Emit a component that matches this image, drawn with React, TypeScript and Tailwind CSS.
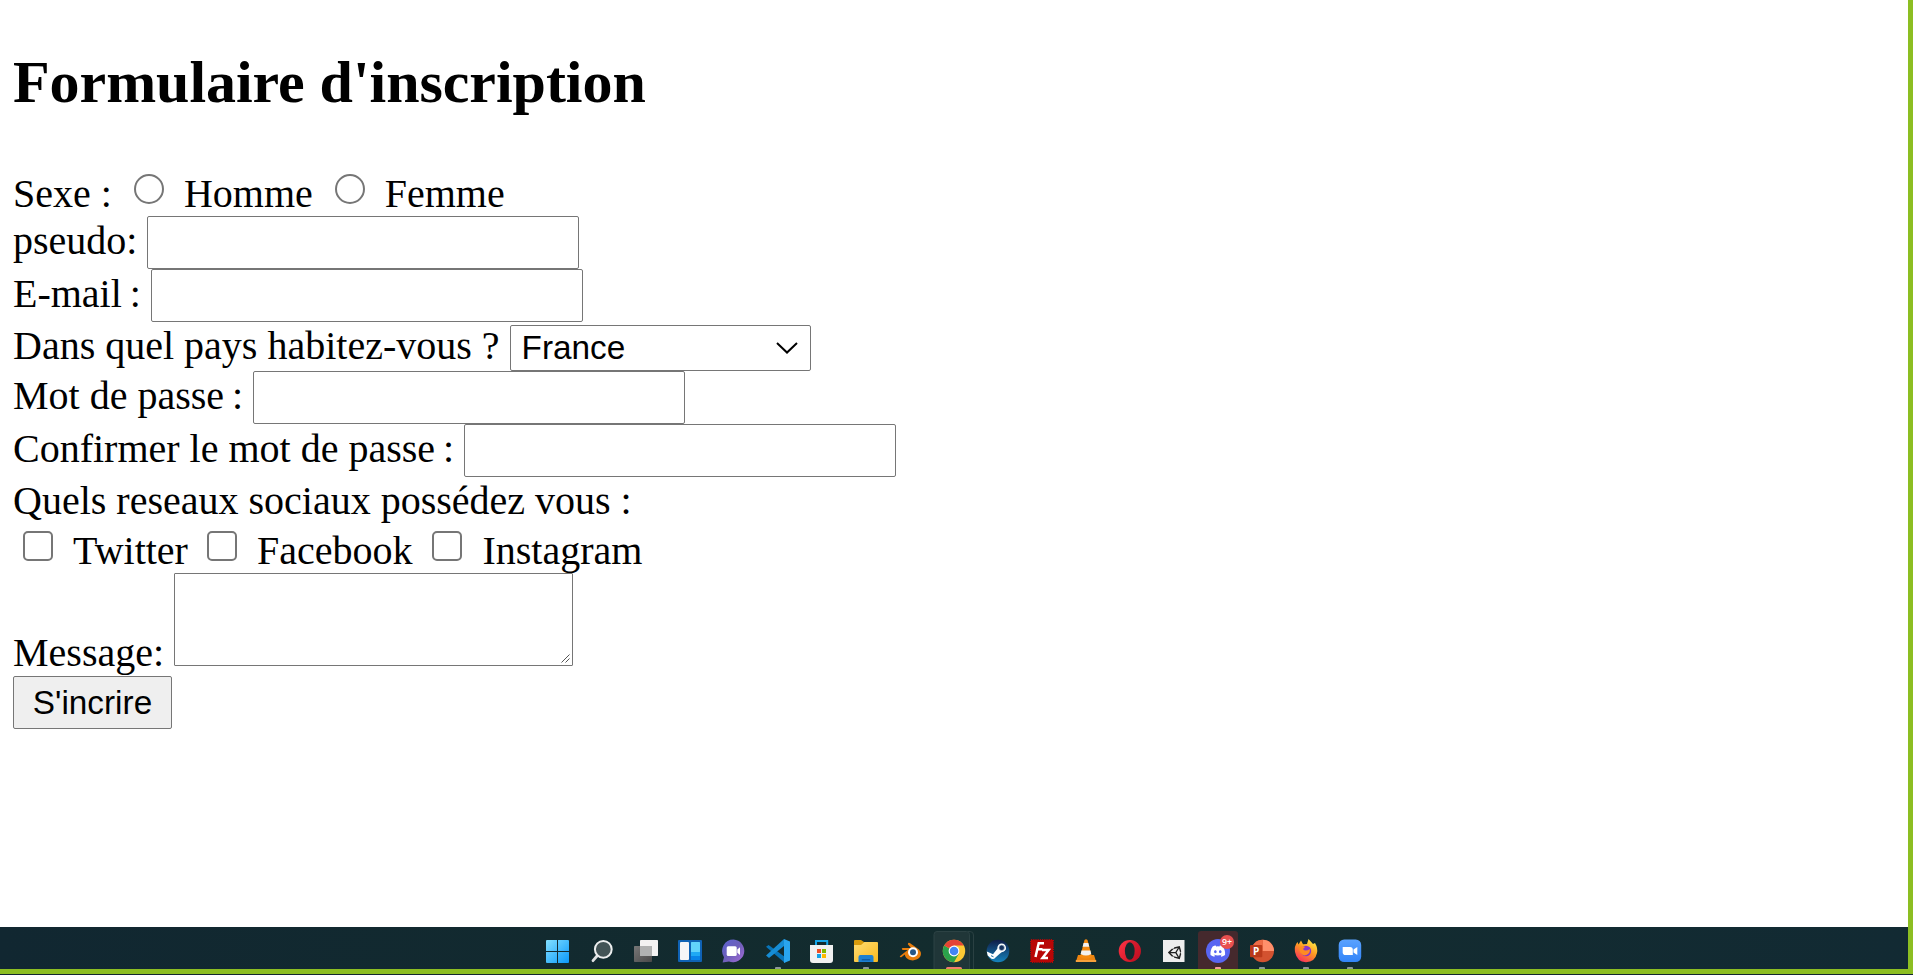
import type { ReactNode } from "react";
import { FaDiscord, FaUnity } from "react-icons/fa";

const box = "block h-[53px] w-[432px] rounded-[2px] border border-[#767676] bg-white outline-none";
const text = "whitespace-pre leading-[40px]";

function Field({ label, id, type, colon }: { label: string; id: string; type: string; colon: string }) {
  return (
    <div className="flex h-[53px] gap-[10px]">
      <label htmlFor={id} className={`${text} mt-[5px]`}>
        {label}
        <span className={colon}>:</span>
      </label>
      <input id={id} type={type} className={box} />
    </div>
  );
}

function Radio({ label, space }: { label: string; space: string }) {
  return (
    <label className={`flex ${space}`}>
      <input
        type="radio"
        name="sexe"
        className="mt-1 size-[30px] appearance-none rounded-full border-2 border-[#767676] bg-white"
      />
      <span className={`${text} ml-5 mt-1`}>{label}</span>
    </label>
  );
}

function Check({ label, space }: { label: string; space: string }) {
  return (
    <label className={`flex ${space}`}>
      <input
        type="checkbox"
        className="mt-1 size-[30px] appearance-none rounded-[5px] border-2 border-[#767676] bg-white"
      />
      <span className={`${text} ml-5 mt-1`}>{label}</span>
    </label>
  );
}

function App44({ children, mark }: { children: ReactNode; mark?: string }) {
  return (
    <svg viewBox="0 0 44 42" className="block h-[42px] w-11 shrink-0 overflow-visible">
      {children}
      {mark && <rect x="19" y="40" width="6" height="3" rx="1" fill={mark} />}
    </svg>
  );
}

function Taskbar() {
  const grey = "#8c9698";
  return (
    <div className="flex h-[42px] w-[1908px] overflow-hidden bg-gradient-to-r from-[#112731] via-[#132c2e] to-[#122a33] pl-[536px]">
      <App44>
        <defs>
          <linearGradient id="win" gradientUnits="userSpaceOnUse" x1="10" y1="13" x2="33" y2="36">
            <stop offset="0" stopColor="#83e0ff" />
            <stop offset="1" stopColor="#0a98fb" />
          </linearGradient>
          <linearGradient id="back" x1="0" y1="0" x2="1" y2="1">
            <stop offset="0" stopColor="#777" />
            <stop offset="1" stopColor="#494949" />
          </linearGradient>
          <linearGradient id="chat" x1="0" y1="0" x2="1" y2="1">
            <stop offset="0" stopColor="#5b62d0" />
            <stop offset=".5" stopColor="#6d5fba" />
            <stop offset="1" stopColor="#a56bd8" />
          </linearGradient>
          <linearGradient id="folder" x1="0" y1="0" x2="1" y2="1">
            <stop offset="0" stopColor="#ffdc73" />
            <stop offset="1" stopColor="#f9b91d" />
          </linearGradient>
          <linearGradient id="steam" x1="0" y1="0" x2="0" y2="1">
            <stop offset="0" stopColor="#101b46" />
            <stop offset="1" stopColor="#1583bd" />
          </linearGradient>
          <linearGradient id="opera" x1="0" y1="0" x2="1" y2="1">
            <stop offset="0" stopColor="#ff3446" />
            <stop offset="1" stopColor="#c8101f" />
          </linearGradient>
          <linearGradient id="fox" x1=".8" y1="0" x2=".2" y2="1">
            <stop offset="0" stopColor="#fff04a" />
            <stop offset=".45" stopColor="#ff9b22" />
            <stop offset="1" stopColor="#f72660" />
          </linearGradient>
          <linearGradient id="zoom" x1="0" y1="0" x2="0" y2="1">
            <stop offset="0" stopColor="#5aa2ff" />
            <stop offset="1" stopColor="#3284f8" />
          </linearGradient>
        </defs>
        <g fill="url(#win)">
          <path d="M10 14q0-1 1-1H21V24H10Z" />
          <path d="M22 13H32q1 0 1 1V24H22Z" />
          <path d="M10 25H21V36H11q-1 0-1-1Z" />
          <path d="M22 25H33V35q0 1-1 1H22Z" />
        </g>
      </App44>
      <App44>
        <path d="M17 29L13 33.7" stroke="#dfe1e2" strokeWidth="2.8" strokeLinecap="round" />
        <circle cx="23.3" cy="22.3" r="8.4" fill="#435456" stroke="#eceeee" strokeWidth="2" />
      </App44>
      <App44>
        <rect x="16" y="13" width="18" height="16" rx=".7" fill="#f3f3f3" />
        <rect x="10" y="19" width="18" height="16" rx=".7" fill="url(#back)" />
        <rect x="16" y="19" width="12" height="10" fill="#b0b2b2" />
      </App44>
      <App44>
        <rect x="10" y="13" width="24" height="22" rx="1" fill="#0f62b5" />
        <rect x="12" y="15" width="9" height="18" rx="1" fill="#f5f5f7" />
        <rect x="23" y="15" width="9" height="10" rx=".5" fill="#62d3fb" />
        <rect x="23" y="25" width="9" height="4" fill="#1fa9f5" />
        <rect x="23" y="29" width="9" height="4" fill="#0984e8" />
      </App44>
      <App44>
        <path d="M21.6 12.5A11.4 11.4 0 1 1 17 34.6L10.6 35.5L12 30.2A11.4 11.4 0 0 1 21.6 12.5Z" fill="url(#chat)" />
        <rect x="14.7" y="19.2" width="10" height="9.8" rx="1.5" fill="#fff" />
        <path d="M25.3 22.5L28 20.3V28L25.3 25.8Z" fill="#fff" />
      </App44>
      <App44 mark={grey}>
        <path d="M10 19.7L12.6 18L29 30V36Z" fill="#0874b8" />
        <path d="M10 28.6L28 12V19L13 31Z" fill="#168dd5" />
        <path d="M28 12L34 14.6V33.4L28 36Z" fill="#29a5ef" />
      </App44>
      <App44>
        <path d="M16 19V14H27.2V19" fill="none" stroke="#15a5e8" strokeWidth="2" />
        <path d="M10 18H33V33q0 3-3 3H13q-3 0-3-3Z" fill="#f1f1f1" />
        <path d="M17 22H21V26H17Z" fill="#ef4e24" />
        <path d="M22 22H26V26H22Z" fill="#7db900" />
        <path d="M17 27H21V31H17Z" fill="#13a2e8" />
        <path d="M22 27H26V31H22Z" fill="#ffb900" />
      </App44>
      <App44 mark={grey}>
        <path d="M10 14q0-1 1-1H17L20 15H24V21H10Z" fill="#d99b0c" />
        <path d="M10 18H17L20.5 15H33q1 0 1 1V34q0 1-1 1H11q-1 0-1-1Z" fill="url(#folder)" />
        <path d="M14.5 35V30q0-2 2-2H27.5q2 0 2 2V35Z" fill="#1d80d2" />
        <path d="M18.5 32H25.5q.8 0 .8.8V33.5H17.7V32.8q0-.8.8-.8Z" fill="#0f5da8" />
      </App44>
      <App44>
        <path
          d="M11.8 29.2L19.7 23H14.5q-1.5-1.5 0-2H23L19.8 17.2q.4-2 2-1.2L31 22.6q3.6 4 .5 8c-4.5 5-14 2.8-14.7-3l-3.5 2.6q-1.5.4-1.5-1Z"
          fill="#e87d0d"
        />
        <circle cx="25" cy="25.2" r="5" fill="#fff" />
        <circle cx="25" cy="25.2" r="3" fill="#265787" />
      </App44>
      <App44>
        <path d="M36 4.5H38q3.5 0 3.5 3.5V42" fill="none" stroke="#2a4042" strokeWidth="1" />
        <rect x="2" y="4.5" width="35.5" height="42" rx="3" fill="#203638" stroke="#2c4244" />
        <circle cx="22" cy="24" r="11.2" fill="#fbc934" />
        <path d="M22 24L12.3 18.4A11.2 11.2 0 0 0 22 35.2L26.8 26.8Z" fill="#2ba24c" />
        <path d="M22 24L12.3 18.4A11.2 11.2 0 0 1 31.7 18.4H22Z" fill="#e54335" />
        <circle cx="22" cy="24" r="5.4" fill="#fff" />
        <circle cx="22" cy="24" r="4.3" fill="#4285f4" />
        <rect x="14" y="40" width="16" height="4" rx="1.5" fill="#f27d6b" />
      </App44>
      <App44>
        <circle cx="22" cy="24" r="11.3" fill="url(#steam)" />
        <path d="M10.8 24.6L17 27.2L21.5 21.5L27 17L30 22L24 26.5L19.5 30.5Q17 33.5 14 30.5L11.7 28.5Z" fill="#fff" />
        <circle cx="25.7" cy="20.8" r="4.3" fill="#fff" />
        <circle cx="25.7" cy="20.8" r="2.7" fill="#17325f" stroke="#b9c8d8" strokeWidth=".6" />
        <path d="M15 28.7L17.5 29.8" stroke="#2072a5" strokeWidth="1" />
      </App44>
      <App44>
        <rect x="11" y="13" width="22" height="22" fill="#b80606" stroke="#b80606" strokeWidth="2" strokeDasharray="1.2 1" />
        <path d="M24 16.3H18.7L15.5 30M17.2 22.3H22.5M22 23H28.6L22.5 31H28" fill="none" stroke="#fff" strokeWidth="2.5" />
      </App44>
      <App44>
        <path d="M14 28H30L32 34.5H12Z" fill="#ed8410" />
        <path d="M20.5 13q1.5-1.5 3 0L28 30q-6 3.5-12 0Z" fill="#f48b12" />
        <path d="M19.6 16H24.3L25.3 19.8H18.6ZM17.5 23.5H26.4L27.2 27Q22 30 16.6 27Z" fill="#f2f2f2" />
        <path d="M11.8 33H32.2V35H11.8Z" fill="#f7a03b" />
      </App44>
      <App44>
        <circle cx="21.8" cy="24" r="11.1" fill="url(#opera)" />
        <path d="M18 16.5Q23 12 28 15Q32.9 19 32.9 24Q32.9 30 28 33Q23 36 18 31.5Q28 29 27 23Q26 17 18 16.5Z" fill="#a7061e" opacity=".3" />
        <ellipse cx="21.8" cy="24" rx="4.9" ry="8.8" fill="#132b2e" />
      </App44>
      <App44>
        <rect x="11" y="13" width="21.5" height="22" fill="#eeeeee" />
        <FaUnity x="15.4" y="17.6" width="12.4" height="12.4" color="#222" />
      </App44>
      <App44 mark="#f79b9b">
        <rect x="2" y="4" width="40" height="42" rx="3" fill="#45292d" />
        <circle cx="22" cy="24" r="12" fill="#5865f2" />
        <FaDiscord x="13.8" y="16.2" width="16" height="16" color="#fff" />
        <circle cx="31" cy="15" r="7.1" fill="#e9504f" />
        <text x="31" y="18" textAnchor="middle" fontFamily="Open Sans, sans-serif" fontSize="8.8" fontWeight="600" fill="#fff">
          9+
        </text>
      </App44>
      <App44 mark={grey}>
        <circle cx="22.7" cy="24" r="11.3" fill="#d35230" />
        <path d="M22.7 12.7A11.3 11.3 0 0 1 34 24H22.7Z" fill="#ff8f6b" />
        <path d="M11.4 24H22.7V12.7A11.3 11.3 0 0 0 11.4 24Z" fill="#ed6c47" />
        <rect x="10" y="18" width="12.3" height="12.3" rx="1" fill="#b93a1b" />
        <text x="16.2" y="27.7" textAnchor="middle" fontFamily="Open Sans, sans-serif" fontSize="10" fontWeight="700" fill="#fff">
          P
        </text>
      </App44>
      <App44 mark={grey}>
        <path
          d="M11 25Q10 19 13.5 15L14.5 17.5L17 13.5L19 17.3L23 17L24.5 12L29 17L31 16Q34 21 33 26Q31 35 22 35.3Q13 35 11 25Z"
          fill="url(#fox)"
        />
        <circle cx="22" cy="24" r="5.2" fill="#8b36c8" />
        <path d="M15 21Q18 18 21 20L19 22Q21 25 26 22Q26 28 20.5 28.4Q16 28 15 21Z" fill="#ff8b22" />
      </App44>
      <App44 mark={grey}>
        <rect x="10.7" y="12.5" width="22.5" height="22.5" rx="5.5" fill="url(#zoom)" />
        <path d="M14.7 20H22q2.8 0 2.8 2.8V28H17.5q-2.8 0-2.8-2.8Z" fill="#fff" />
        <path d="M25.5 22.6L29.3 20V28L25.5 25.5Z" fill="#fff" />
      </App44>
    </div>
  );
}

export default function App() {
  return (
    <div className="flex h-[975px] w-[1913px] flex-col overflow-hidden bg-[#12262f]">
      <div className="flex h-[974px] flex-col overflow-hidden border-b-[5px] border-r-[5px] border-[#8cbe22] bg-white">
        <form
          className="flex h-[927px] shrink-0 flex-col items-start pl-[13px] text-[40px] text-black [font-family:'Liberation_Serif',serif]"
          onSubmit={(e) => e.preventDefault()}
        >
          <h2 className="mt-12 h-[122px] text-[60px] font-bold leading-[68px] tracking-[-0.05px]">Formulaire d'inscription</h2>

          <div className="flex h-[46px]">
            <span className={`${text} mt-1`}>Sexe :</span>
            <Radio label="Homme" space="ml-[22px]" />
            <Radio label="Femme" space="ml-[22px]" />
          </div>

          <Field id="pseudo" label="pseudo" type="text" colon="ml-0" />
          <Field id="mail" label="E-mail " type="email" colon="-ml-0.5" />

          <div className="flex h-[49px] gap-[10px]">
            <label htmlFor="pays" className={`${text} mt-1`}>Dans quel pays habitez-vous ?</label>
            <div className="mt-[3px] grid h-[46px] w-[301px] items-center">
              <select
                id="pays"
                className="col-start-1 row-start-1 h-[46px] w-[301px] appearance-none rounded-[2px] border border-[#767676] bg-white pl-[11px] text-[33.33px] leading-[40px] [font-family:'Liberation_Sans',sans-serif]"
              >
                <option>France</option>
              </select>
              <svg viewBox="0 0 22 12" className="pointer-events-none col-start-1 row-start-1 mr-[13px] h-3 w-[22px] justify-self-end">
                <path d="M1 1L11 10.5L21 1" fill="none" stroke="#000" strokeWidth="2" />
              </svg>
            </div>
          </div>

          <Field id="pass" label="Mot de passe " type="password" colon="-ml-0.5" />
          <Field id="confirm" label="Confirmer le mot de passe " type="password" colon="-ml-0.5" />

          <div className={`${text} mt-1 h-[46px]`}>Quels reseaux sociaux possédez vous :</div>

          <div className="flex h-[46px]">
            <Check label="Twitter" space="ml-[10px]" />
            <Check label="Facebook" space="ml-[19px]" />
            <Check label="Instagram" space="ml-5" />
          </div>

          <div className="flex h-[103px] gap-[10px]">
            <label htmlFor="message" className={`${text} mt-[60px]`}>Message:</label>
            <div className="grid h-[93px] w-[399px]">
              <textarea
                id="message"
                className="col-start-1 row-start-1 block h-[93px] w-[399px] resize-none rounded-[1px] border border-[#767676] bg-white"
              />
              <svg viewBox="0 0 9 9" className="pointer-events-none col-start-1 row-start-1 mb-[3px] mr-[3px] size-[9px] self-end justify-self-end">
                <path d="M.5 8.5L8.5 .5M4.5 8.5L8.5 4.5" stroke="#555" strokeWidth="1" />
              </svg>
            </div>
          </div>

          <button
            type="submit"
            className="h-[53px] w-[159px] rounded-[2px] border border-[#767676] bg-[#efefef] text-[33.33px] leading-[40px] [font-family:'Liberation_Sans',sans-serif]"
          >
            S'incrire
          </button>
        </form>
        <Taskbar />
      </div>
    </div>
  );
}
